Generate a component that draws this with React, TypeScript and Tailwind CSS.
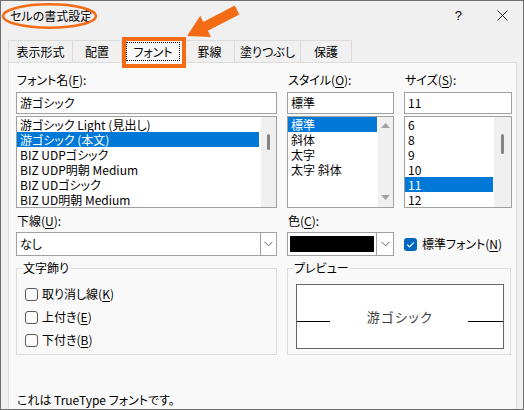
import React from "react";

const U = ({ c }: { c: string }) => <span className="underline underline-offset-[2px]">{c}</span>;

const Chevron = () => (
  <svg width="9" height="6" viewBox="0 0 9 6">
    <polyline points="0.5,0.8 4.5,4.8 8.5,0.8" fill="none" stroke="#5f5f5f" strokeWidth="1" />
  </svg>
);

const Box = ({ checked }: { checked?: boolean }) =>
  checked ? (
    <span className="w-[13px] h-[13px] rounded-[3px] bg-[#0067c0] flex items-center justify-center shrink-0">
      <svg width="11" height="11" viewBox="0 0 11 11">
        <polyline points="2.3,5.6 4.5,7.8 8.8,3.4" fill="none" stroke="#fff" strokeWidth="1.2" />
      </svg>
    </span>
  ) : (
    <span className="w-[13px] h-[13px] rounded-[3px] border border-[#5a5a5a] bg-[#fbfbfb] shrink-0" />
  );

const Item = ({ t, sel }: { t: string; sel?: boolean }) => (
  <div className={sel ? "h-[15px] leading-[15px] pl-[3px] whitespace-nowrap bg-[#0078d7] text-white" : "h-[15px] leading-[15px] pl-[3px] whitespace-nowrap"}>
    {t}
  </div>
);

export default function App() {
  const tabs = [
    { t: "表示形式", w: "w-[64px]" },
    { t: "配置", w: "w-[49px]" },
    { t: "フォント", w: "w-[63px]", sel: true },
    { t: "罫線", w: "w-[50px]" },
    { t: "塗りつぶし", w: "w-[66px]" },
    { t: "保護", w: "w-[52px]" },
  ];
  return (
    <div className={"w-[524px] h-[410px] relative overflow-hidden bg-[#f0f0f0] border border-[#6f6f6f] flex flex-col text-[12px] text-black font-['Noto_Sans_CJK_JP',sans-serif] [font-feature-settings:'palt']"}>
      {/* title bar */}
      <div className="h-[29px] shrink-0 flex items-center pl-[9px]">
        <span className="leading-[16px] mt-[1px]">セルの書式設定</span>
        <span className="ml-auto mr-[35px] text-[13px] leading-[16px] font-['Liberation_Sans',sans-serif]">?</span>
        <span className="mr-[15px] flex items-center">
          <svg width="11" height="11" viewBox="0 0 11 11">
            <line x1="0.5" y1="0.5" x2="10.5" y2="10.5" stroke="#222" strokeWidth="1" />
            <line x1="10.5" y1="0.5" x2="0.5" y2="10.5" stroke="#222" strokeWidth="1" />
          </svg>
        </span>
      </div>

      {/* tabs */}
      <div className="mt-[10px] ml-[7px] h-[23px] -mb-[1px] flex items-start relative z-10 shrink-0">
        {tabs.map((tb, i) => (
          <div
            key={tb.t}
            className={
              (tb.sel
                ? "h-[23px] bg-[#f9f9f9] border-l border-t border-[#dcdcdc] "
                : "h-[22px] bg-[#f0f0f0] border-l border-t border-[#dcdcdc] ") +
              (i === tabs.length - 1 ? "border-r " : "") +
              tb.w +
              " flex items-center justify-center leading-[16px]"
            }
          >
            {tb.sel ? (
              <span className="border border-dotted border-black px-[6px] h-[19px] flex items-center -mt-[1px]">{tb.t}</span>
            ) : (
              <span>{tb.t}</span>
            )}
          </div>
        ))}
      </div>

      {/* panel */}
      <div className="flex-1 ml-[7px] mr-[6px] bg-[#f9f9f9] border-l border-r border-t border-[#dcdcdc] pl-[7px] pt-[9px] flex flex-col">
        <div className="grid grid-cols-[261px_107px_108px] gap-x-[10px]">
          {/* font name */}
          <div className="flex flex-col">
            <div className="h-[16px] leading-[16px] pl-[1px]">
              フォント名(<U c="F" />):
            </div>
            <div className="mt-[4px] h-[22px] border border-[#a0a0a0] bg-white pl-[3px] leading-[20px]">游ゴシック</div>
            <div className="mt-[2px] h-[92px] border border-[#a0a0a0] bg-white flex">
              <div className="flex-1 flex flex-col">
                <Item t="游ゴシック Light (見出し)" />
                <Item t="游ゴシック (本文)" sel />
                <Item t="BIZ UDPゴシック" />
                <Item t="BIZ UDP明朝 Medium" />
                <Item t="BIZ UDゴシック" />
                <Item t="BIZ UD明朝 Medium" />
              </div>
              <div className="ml-[2px] w-[15px] bg-[#f0f0f0] flex flex-col items-center">
                <div className="mt-[17px] w-[3px] h-[16px] rounded-full bg-[#858585]" />
              </div>
            </div>
          </div>
          {/* style */}
          <div className="flex flex-col">
            <div className="h-[16px] leading-[16px] pl-[1px]">
              スタイル(<U c="O" />):
            </div>
            <div className="mt-[4px] h-[22px] border border-[#a0a0a0] bg-white pl-[3px] leading-[20px]">標準</div>
            <div className="mt-[2px] h-[92px] border border-[#a0a0a0] bg-white flex">
              <div className="w-[89px] flex flex-col">
                <Item t="標準" sel />
                <Item t="斜体" />
                <Item t="太字" />
                <Item t="太字 斜体" />
              </div>
              <div className="ml-[1px] flex-1 bg-[#f0f0f0] flex flex-col items-center justify-between pt-[6px] pb-[7px]">
                <svg width="9" height="5" viewBox="0 0 9 5">
                  <polygon points="0,5 4.5,0 9,5" fill="#a3a3a3" />
                </svg>
                <svg width="9" height="5" viewBox="0 0 9 5">
                  <polygon points="0,0 4.5,5 9,0" fill="#a3a3a3" />
                </svg>
              </div>
            </div>
          </div>
          {/* size */}
          <div className="flex flex-col">
            <div className="h-[16px] leading-[16px] pl-[1px]">
              サイズ(<U c="S" />):
            </div>
            <div className="mt-[4px] h-[22px] border border-[#a0a0a0] bg-white pl-[3px] leading-[20px]">11</div>
            <div className="mt-[2px] h-[92px] border border-[#a0a0a0] bg-white flex">
              <div className="w-[88px] flex flex-col">
                <Item t="6" />
                <Item t="8" />
                <Item t="9" />
                <Item t="10" />
                <Item t="11" sel />
                <Item t="12" />
              </div>
              <div className="ml-[1px] flex-1 bg-[#f0f0f0] flex flex-col items-center">
                <div className="mt-[17px] w-[3px] h-[20px] rounded-full bg-[#858585]" />
              </div>
            </div>
          </div>
        </div>

        {/* second row */}
        <div className="grid grid-cols-[261px_224px] gap-x-[10px] mt-[5px]">
          <div className="flex flex-col">
            <div className="h-[16px] leading-[16px] pl-[1px]">
              下線(<U c="U" />):
            </div>
            <div className="mt-[3px] h-[24px] border border-[#a0a0a0] bg-white flex">
              <span className="pl-[3px] leading-[22px]">なし</span>
              <span className="ml-auto w-[16px] border-l border-[#a0a0a0] flex items-center justify-center">
                <Chevron />
              </span>
            </div>
          </div>
          <div className="flex flex-col">
            <div className="h-[16px] leading-[16px] pl-[1px]">
              色(<U c="C" />):
            </div>
            <div className="mt-[3px] flex items-center">
              <div className="w-[107px] h-[24px] border border-[#a0a0a0] bg-white flex">
                <span className="ml-[2px] my-[3px] w-[84px] bg-black" />
                <span className="ml-auto w-[17px] border-l border-[#a0a0a0] flex items-center justify-center">
                  <Chevron />
                </span>
              </div>
              <div className="ml-[10px] flex items-center gap-[5px]">
                <Box checked />
                <span className="leading-[16px]">
                  標準フォント(<U c="N" />)
                </span>
              </div>
            </div>
          </div>
        </div>

        {/* groups */}
        <div className="grid grid-cols-[261px_224px] gap-x-[10px] mt-[12px]">
          <div className="relative h-[87px] border border-[#dcdcdc] flex flex-col pl-[8px] pt-[17px] gap-[7px]">
            <span className="absolute -top-[9px] left-[5px] px-[1px] bg-[#f9f9f9] leading-[16px]">文字飾り</span>
            <div className="h-[16px] flex items-center gap-[4px]">
              <Box />
              <span className="leading-[16px]">
                取り消し線(<U c="K" />)
              </span>
            </div>
            <div className="h-[16px] flex items-center gap-[4px]">
              <Box />
              <span className="leading-[16px]">
                上付き(<U c="E" />)
              </span>
            </div>
            <div className="h-[16px] flex items-center gap-[4px]">
              <Box />
              <span className="leading-[16px]">
                下付き(<U c="B" />)
              </span>
            </div>
          </div>
          <div className="relative h-[87px] border border-[#dcdcdc] pl-[8px] pr-[6px] pt-[15px]">
            <span className="absolute -top-[9px] left-[5px] px-[1px] bg-[#f9f9f9] leading-[16px]">プレビュー</span>
            <div className="h-[65px] border border-[#646464] bg-white flex items-center justify-between">
              <span className="w-[33px] h-[1px] bg-black mt-[10px]" />
              <span className="text-[13px] tracking-[1.5px] text-[#3c3c3c] leading-[18px] -mb-[1px] pl-[2px]">游ゴシック</span>
              <span className="w-[35px] h-[1px] bg-black mt-[10px]" />
            </div>
          </div>
        </div>

        <div className="mt-[37px] h-[16px] leading-[16px] pl-[1px] whitespace-nowrap">これは TrueType フォントです。</div>
      </div>

      {/* annotations */}
      <svg className="absolute left-0 top-0 z-20 pointer-events-none" width="100" height="32" viewBox="0 0 100 32">
        <ellipse cx="48.5" cy="15" rx="46.5" ry="11.8" fill="none" stroke="#f36c15" strokeWidth="2.6" />
      </svg>
      <div className="absolute left-[121px] top-[36px] z-20 w-[64px] h-[31px] border-4 border-solid border-[#f36c15] pointer-events-none" />
      <svg className="absolute left-0 top-0 z-20 pointer-events-none" width="250" height="45" viewBox="0 0 250 45">
        <polygon
          points="186,35 209.9,35.9 206.9,29.7 238.3,13.4 233.7,4.6 202.3,20.9 199.3,14.7"
          fill="#f36c15"
        />
      </svg>
    </div>
  );
}
